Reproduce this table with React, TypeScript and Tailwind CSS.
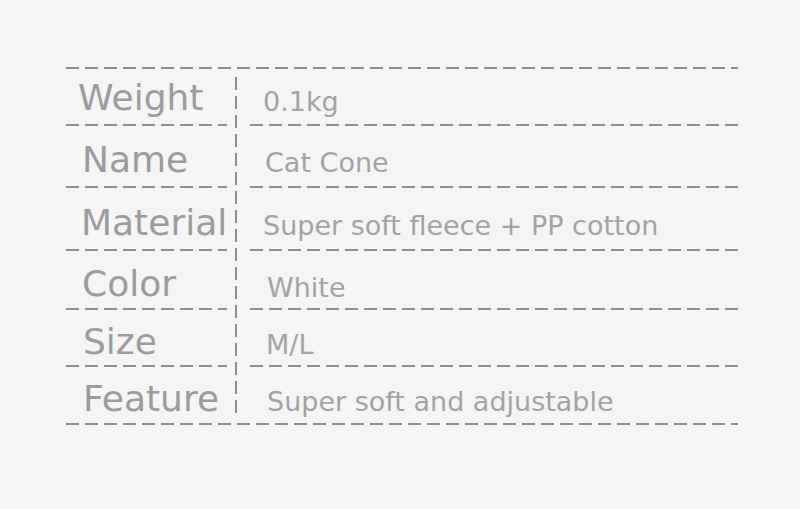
import React from "react";

const rows = [
  { label: "Weight", value: "0.1kg", h: 55, lx: 12, vx: 13, lp: 3, vp: 10 },
  { label: "Name", value: "Cat Cone", h: 60, lx: 16, vx: 15, lp: 8, vp: 12 },
  { label: "Material", value: "Super soft fleece + PP cotton", h: 61, lx: 15, vx: 13, lp: 9, vp: 13 },
  { label: "Color", value: "White", h: 57, lx: 16, vx: 17, lp: 9, vp: 15 },
  { label: "Size", value: "M/L", h: 55, lx: 17, vx: 16, lp: 8, vp: 14 },
  { label: "Feature", value: "Super soft and adjustable", h: 56, lx: 17, vx: 17, lp: 7, vp: 12 },
];

const HLine = ({ className = "" }: { className?: string }) => (
  <div
    className={
      "h-[2px] bg-[linear-gradient(to_right,#8e8e8e_13px,transparent_13px)] bg-[length:19px_2px] bg-repeat-x " +
      className
    }
  />
);

export default function App() {
  return (
    <div
      className="w-[800px] h-[509px] bg-[#f5f5f5] pt-[67px] pl-[66px]"
      style={{ fontFamily: '"DejaVu Sans", sans-serif' }}
    >
      <div className="w-[672px] flex flex-col">
        <HLine className="w-[672px]" />
        <div className="flex">
          {/* labels column */}
          <div className="w-[161px] flex flex-col">
            {rows.map((r, i) => (
              <React.Fragment key={r.label}>
                <div
                  className="flex items-center text-[36px] text-[#9c9c9c] leading-none"
                  style={{ height: r.h, paddingLeft: r.lx, paddingTop: r.lp }}
                >
                  {r.label}
                </div>
                {i < rows.length - 1 && <HLine className="w-[161px]" />}
              </React.Fragment>
            ))}
          </div>
          {/* divider */}
          <div className="w-[23px] flex pl-[8px] pt-[8px] pb-[6px]">
            <div className="w-[2px] bg-[linear-gradient(to_bottom,#8e8e8e_13px,transparent_13px)] bg-[length:2px_19px] bg-repeat-y" />
          </div>
          {/* values column */}
          <div className="flex-1 flex flex-col">
            {rows.map((r, i) => (
              <React.Fragment key={r.label}>
                <div
                  className="flex items-center text-[27px] text-[#a3a3a3] leading-none"
                  style={{ height: r.h, paddingLeft: r.vx, paddingTop: r.vp }}
                >
                  {r.value}
                </div>
                {i < rows.length - 1 && <HLine className="w-full" />}
              </React.Fragment>
            ))}
          </div>
        </div>
        <HLine className="w-[672px]" />
      </div>
    </div>
  );
}
